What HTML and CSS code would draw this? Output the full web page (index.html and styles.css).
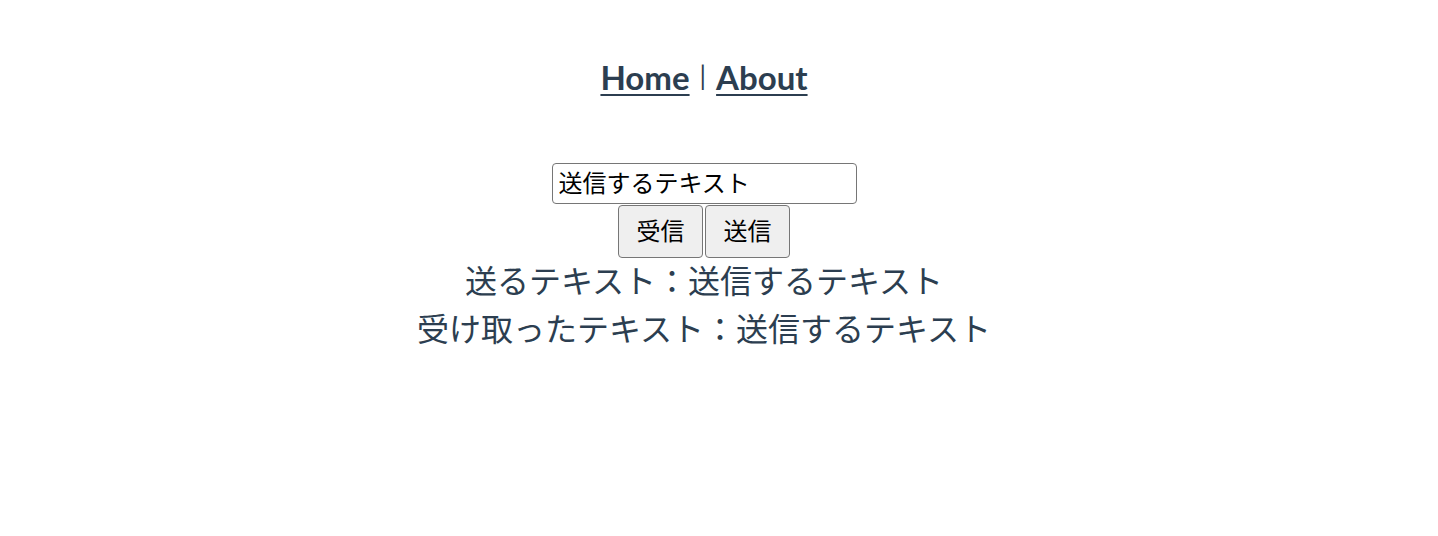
FILE: index.html
```html
<!DOCTYPE html>
<html lang="ja">
<head>
<meta charset="utf-8">
<title>App</title>
<link rel="stylesheet" href="styles.css">
</head>
<body>
<div class="app">
  <nav class="nav">
    <a href="#" class="nav-link">Home</a><span class="sep">|</span><a href="#" class="nav-link">About</a>
  </nav>
  <main class="content">
    <input class="text-input" type="text" value="送信するテキスト">
    <div class="buttons">
      <button class="btn">受信</button>
      <button class="btn">送信</button>
    </div>
    <div class="lines">
      <p class="line">送るテキスト：送信するテキスト</p>
      <p class="line">受け取ったテキスト：送信するテキスト</p>
    </div>
  </main>
</div>
</body>
</html>
```

FILE: styles.css
```css
html, body {
  margin: 0;
  padding: 0;
  background: #ffffff;
}

.app {
  font-family: Lato, "Noto Sans CJK JP", sans-serif;
  color: #2c3e50;
  text-align: center;
  padding-right: 30px;
}

.nav {
  padding: 58px 0 0;
  height: 105px;
  font-size: 33px;
  font-weight: 700;
  line-height: 38px;
  display: flex;
  justify-content: center;
  align-items: flex-start;
}

.nav-link {
  color: #2c3e50;
  text-decoration: underline;
  text-decoration-thickness: 2px;
  text-underline-offset: 4px;
}

.sep {
  font-weight: 400;
  font-size: 26px;
  margin: 0 10px;
  position: relative;
  top: -2px;
}

.content {
  display: flex;
  flex-direction: column;
  align-items: center;
}

.text-input {
  box-sizing: border-box;
  width: 305px;
  height: 41px;
  margin: 0;
  padding: 0 6px 5px;
  font-family: "Noto Sans CJK JP", sans-serif;
  font-size: 24px;
  color: #000;
  border: 1.5px solid #767676;
  border-radius: 4px;
  outline: none;
}

.buttons {
  display: flex;
  gap: 2px;
  margin-top: 1px;
}

.btn {
  box-sizing: border-box;
  width: 85px;
  height: 53px;
  margin: 0;
  padding: 0 0 4px;
  font-family: "Noto Sans CJK JP", sans-serif;
  font-size: 24px;
  color: #000;
  background: #efefef;
  border: 1.5px solid #767676;
  border-radius: 4px;
}

.lines {
  margin-top: -3px;
}

.line {
  margin: 0;
  font-family: "Noto Sans CJK JP", sans-serif;
  font-size: 32px;
  line-height: 48px;
}
```
